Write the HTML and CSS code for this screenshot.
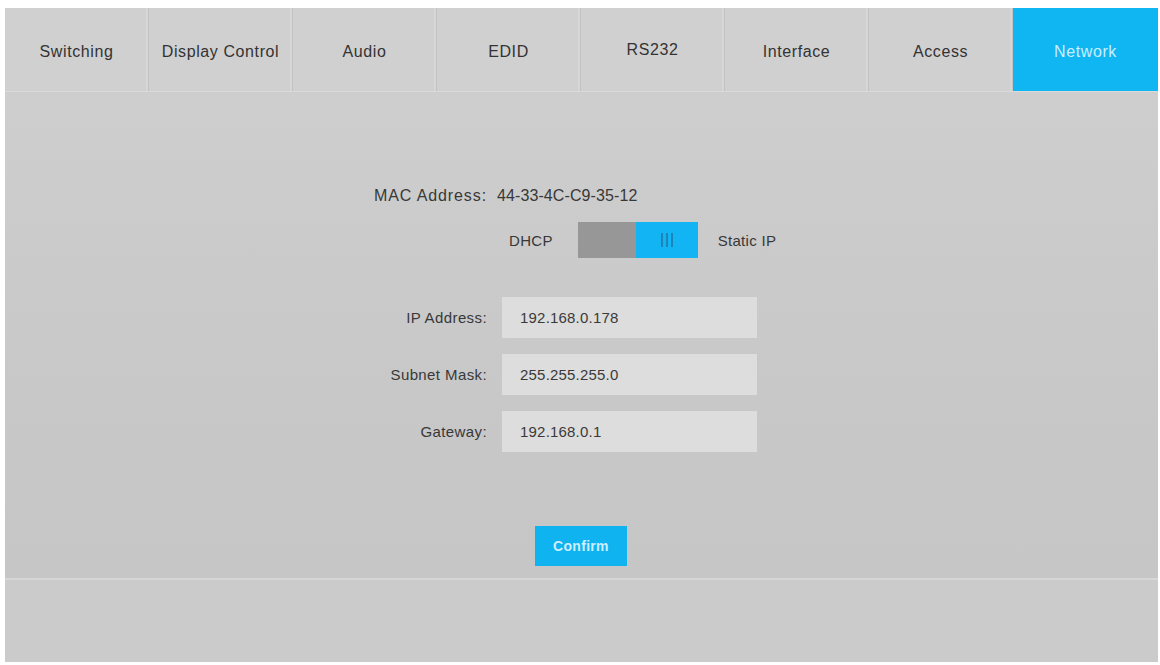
FILE: index.html
```html
<!DOCTYPE html>
<html lang="en">
<head>
<meta charset="utf-8">
<title>Network</title>
<link rel="stylesheet" href="styles.css">
</head>
<body>
<div class="panel">
  <nav class="tabs">
    <div class="tab">Switching</div>
    <div class="tab">Display Control</div>
    <div class="tab">Audio</div>
    <div class="tab">EDID</div>
    <div class="tab tab-raised">RS232</div>
    <div class="tab">Interface</div>
    <div class="tab">Access</div>
    <div class="tab active">Network</div>
  </nav>
  <main class="content">
    <div class="mac-row">
      <span class="mac-label">MAC Address:</span>
      <span class="mac-value">44-33-4C-C9-35-12</span>
    </div>
    <div class="mode-row">
      <span class="mode-text">DHCP</span>
      <div class="toggle">
        <span class="toggle-off"></span>
        <span class="toggle-on"><span class="grip"></span><span class="grip"></span><span class="grip"></span></span>
      </div>
      <span class="mode-text">Static IP</span>
    </div>
    <div class="fields">
      <label class="field-label">IP Address:</label>
      <div class="field-box">192.168.0.178</div>
      <label class="field-label">Subnet Mask:</label>
      <div class="field-box">255.255.255.0</div>
      <label class="field-label">Gateway:</label>
      <div class="field-box">192.168.0.1</div>
    </div>
    <div class="actions">
      <button class="confirm">Confirm</button>
    </div>
  </main>
  <footer class="footer"></footer>
</div>
</body>
</html>
```

FILE: styles.css
```css
html, body {
  margin: 0;
  padding: 0;
  background: #ffffff;
}

body {
  font-family: "Liberation Sans", Arial, sans-serif;
  color: #383838;
}

.panel {
  margin: 8px 2px 0 5px;
  width: 1153px;
  height: 654px;
  display: flex;
  flex-direction: column;
  background: #c9c9c9;
}

.tabs {
  display: flex;
  height: 83px;
  border-bottom: 1px solid #dadada;
  background: #d0d0d0;
}

.tab {
  width: 144px;
  flex: none;
  display: flex;
  align-items: center;
  justify-content: center;
  font-size: 16px;
  letter-spacing: 0.6px;
  color: #333333;
  border-right: 1px solid #c3c3c3;
  box-shadow: inset -2px 0 0 #d6d6d6;
  box-sizing: border-box;
  padding-top: 4px;
}

.tab-raised {
  padding-top: 0;
}

.tab.active {
  flex: 1;
  background: #0fb6f2;
  color: #c9efff;
  border-right: none;
  box-shadow: none;
}

.content {
  height: 488px;
  box-sizing: border-box;
  padding: 94px 0 0 295px;
  background: linear-gradient(#cecece, #c8c8c8 60%, #c6c6c6);
  border-bottom: 2px solid #d6d6d6;
}

.mac-row {
  display: grid;
  grid-template-columns: 187px auto;
  column-gap: 10px;
  height: 20px;
  align-items: center;
  font-size: 16px;
}

.mac-label {
  text-align: right;
  letter-spacing: 0.9px;
}

.mac-value {
  letter-spacing: 0.1px;
}

.mode-row {
  display: flex;
  align-items: center;
  margin: 16px 0 0 209px;
  height: 36px;
  font-size: 15px;
}

.mode-text {
  letter-spacing: 0.3px;
}

.toggle {
  display: flex;
  width: 120px;
  height: 36px;
  margin: 0 20px 0 25px;
}

.toggle-off {
  width: 58px;
  background: #979797;
}

.toggle-on {
  flex: 1;
  background: #12b4f3;
  display: flex;
  justify-content: center;
  align-items: center;
  gap: 3px;
}

.grip {
  width: 2px;
  height: 14px;
  background: #1a86b8;
}

.fields {
  display: grid;
  grid-template-columns: 187px 255px;
  column-gap: 15px;
  row-gap: 16px;
  margin-top: 39px;
  align-items: center;
}

.field-label {
  text-align: right;
  font-size: 15px;
  letter-spacing: 0.4px;
}

.field-box {
  height: 41px;
  box-sizing: border-box;
  padding-left: 18px;
  display: flex;
  align-items: center;
  background: #dddddd;
  font-size: 15px;
  letter-spacing: 0.2px;
  color: #3a3a3a;
}

.actions {
  margin: 74px 0 0 235px;
}

.confirm {
  width: 92px;
  height: 40px;
  border: none;
  border-radius: 0;
  background: #0fb3f0;
  color: #cdeeff;
  font-family: "Liberation Sans", Arial, sans-serif;
  font-size: 14px;
  font-weight: bold;
  letter-spacing: 0.3px;
  padding: 0;
}

.footer {
  flex: 1;
  background: #cbcbcb;
}
```
